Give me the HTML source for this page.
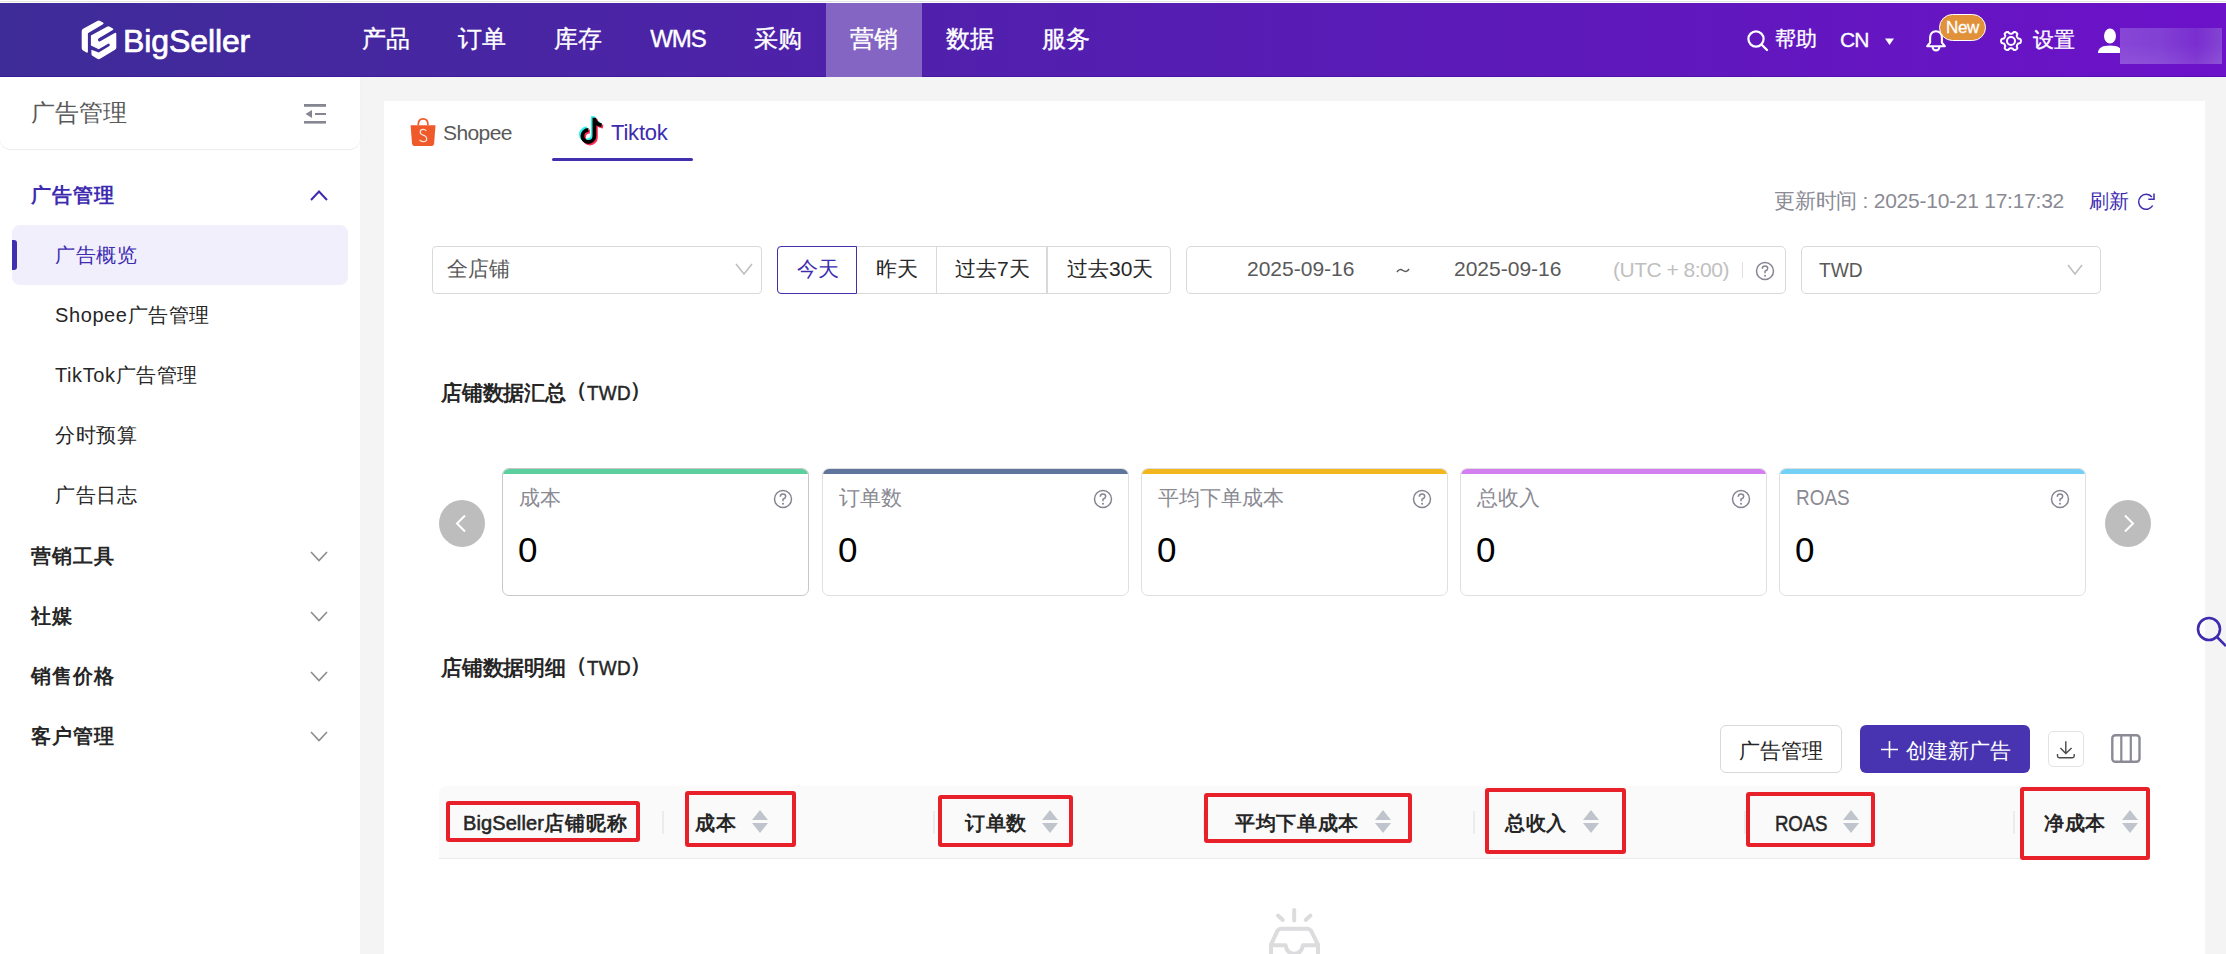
<!DOCTYPE html>
<html><head><meta charset="utf-8">
<style>
*{margin:0;padding:0;box-sizing:border-box}
html,body{width:2226px;height:954px;overflow:hidden;background:#f4f4f4;font-family:"Liberation Sans",sans-serif;color:#262626}
.a{position:absolute;white-space:nowrap;line-height:1}
#topline{position:absolute;left:0;top:0;width:2226px;height:3px;background:#fff}
#topline i{position:absolute;left:0;top:1px;width:2226px;height:1px;background:#e2e4e2}
#hdr{position:absolute;left:0;top:3px;width:2226px;height:74px;background:linear-gradient(90deg,#3e2c98 0%,#541eb0 50%,#6c12c9 100%)}
#hdr .nav{position:absolute;top:0;height:74px;color:#fff;font-size:24px;line-height:71px;text-align:center;-webkit-text-stroke:0.35px #fff}
#hdr .act{background:#8565c4}
#hdrline{position:absolute;left:0;top:73px;width:2226px;height:1px;background:rgba(40,0,150,.35)}
#sidebar{position:absolute;left:0;top:77px;width:360px;height:877px;background:#fff}
#stitle{position:absolute;left:0;top:0;width:360px;height:72px;background:#fff;border-radius:0 0 10px 10px;box-shadow:0 1px 1px rgba(0,0,0,.08)}
#main{position:absolute;left:384px;top:101px;width:1821px;height:853px;background:#fff}
.box{position:absolute;border:1px solid #d9d9d9;border-radius:4px;background:#fff}
.card{position:absolute;top:468px;width:307px;height:128px;border:1px solid #e0e0e0;border-radius:7px;background:#fff;overflow:hidden}
.card .bar{position:absolute;left:-1px;top:-1px;right:-1px;height:6px}
.card .lbl{position:absolute;left:16px;top:15px;font-size:21px;color:#8a8a93}
.card .val{position:absolute;left:15px;top:61px;font-size:35px;color:#000}
.card .q{position:absolute;left:270px;top:20px;line-height:0}
.circ{position:absolute;top:500px;width:46px;height:47px;border-radius:50%;background:#bdbdbd}
.red{position:absolute;border:4px solid #e8202a;border-radius:3px}
.th{position:absolute;top:812px;font-size:20px;letter-spacing:0.7px;font-weight:bold;color:#262626}
.sep{position:absolute;top:811px;width:2px;height:23px;background:#ececec}
.side{position:absolute;left:55px;font-size:20px;letter-spacing:0.6px;color:#262626;line-height:1;white-space:nowrap}
.sec{position:absolute;left:31px;font-size:20px;letter-spacing:0.9px;font-weight:bold;color:#262626;line-height:1;white-space:nowrap}
</style></head><body>
<div id="topline"><i></i></div>
<div id="hdr"><div id="hdrline"></div>
<svg class="a" style="left:78px;top:15px" width="42" height="44" viewBox="0 0 42 44"><g fill="#fff">
<path d="M3.7 13.2 Q3.7 11.6 5.1 10.8 L19.3 2.9 Q20.7 2.1 22.1 2.9 L25 4.6 Q26.4 5.5 25 6.3 L9.9 15.3 L9.9 33.6 Q9.9 35.2 8.5 34.4 L5.1 32.4 Q3.7 31.6 3.7 30 Z"/>
<path d="M12.9 17.6 L29 8.7 Q30.4 7.9 31.8 8.7 L34.8 10.4 Q36.2 11.3 34.8 12.1 L20.9 20.3 Q19.5 21.2 20.1 22.6 Q20.8 24 22.2 23.2 L36.7 14.9 Q38.3 14.1 38.3 15.9 L38.3 29.4 Q38.3 30.9 37 31.7 L22.1 40.8 Q20.7 41.6 19.3 40.8 L14.8 38.1 Q13.4 37.3 13.4 35.7 L13.4 31.8 L20.7 34.4 L30.6 28.6 Q32.2 27.6 31.7 26.4 Q31.1 25.1 29.7 25.9 L20.7 31.3 L12.9 27.6 Z"/>
</g></svg>
<div class="a" style="left:123px;top:22px;font-size:32px;color:#fff;-webkit-text-stroke:0.7px #fff;letter-spacing:-0.1px">BigSeller</div>
<div class="nav" style="left:338px;width:96px">产品</div>
<div class="nav" style="left:434px;width:96px">订单</div>
<div class="nav" style="left:530px;width:96px">库存</div>
<div class="nav" style="left:626px;width:104px;letter-spacing:-1px">WMS</div>
<div class="nav" style="left:730px;width:96px">采购</div>
<div class="nav act" style="left:826px;width:96px">营销</div>
<div class="nav" style="left:922px;width:96px">数据</div>
<div class="nav" style="left:1018px;width:96px">服务</div>
<svg class="a" style="left:1746px;top:26px" width="24" height="24" viewBox="0 0 24 24"><circle cx="10" cy="10" r="7.6" fill="none" stroke="#fff" stroke-width="2.2"/><path d="M15.5 15.5 L21 21" stroke="#fff" stroke-width="2.4" stroke-linecap="round"/></svg>
<div class="a" style="left:1775px;top:25px;font-size:21px;color:#fff;-webkit-text-stroke:0.3px #fff">帮助</div>
<div class="a" style="left:1840px;top:26px;font-size:21px;color:#fff;letter-spacing:-1px;-webkit-text-stroke:0.3px #fff">CN</div>
<svg class="a" style="left:1884px;top:35px" width="11" height="8" viewBox="0 0 11 8"><path d="M1 0.5 L10 0.5 L5.5 7 Z" fill="#fff"/></svg>
<svg class="a" style="left:1925px;top:23px" width="22" height="26" viewBox="0 0 22 26"><path d="M11 5.2 C7 5.2 5.1 8.2 5.1 12 L5.1 16.6 L2.2 20.2 L19.8 20.2 L16.9 16.6 L16.9 12 C16.9 8.2 15 5.2 11 5.2 Z" fill="none" stroke="#fff" stroke-width="2.1" stroke-linejoin="round"/><path d="M7.6 21 A3.4 3.4 0 0 0 14.4 21" fill="none" stroke="#fff" stroke-width="2.1"/></svg>
<div class="a" style="left:1939px;top:11px;width:47px;height:27px;border-radius:14px;background:#e0913a;border:1.3px solid #fff;color:#fff;font-size:17px;line-height:25px;text-align:center;letter-spacing:-0.3px;-webkit-text-stroke:0.3px #fff">New</div>
<svg class="a" style="left:1999px;top:27px" width="24" height="22" viewBox="0 0 24 22"><path fill="none" stroke="#fff" stroke-width="2" d="M21.90 11.00 L21.87 11.52 L21.77 12.03 L21.59 12.52 L21.31 12.98 L20.31 13.23 L19.31 13.38 L18.99 13.68 L18.74 14.00 L18.52 14.32 L18.32 14.65 L18.14 14.99 L17.97 15.34 L17.82 15.71 L17.71 16.14 L18.08 17.08 L18.37 18.07 L18.11 18.54 L17.77 18.94 L17.38 19.29 L16.95 19.57 L16.49 19.80 L15.99 19.97 L15.48 20.06 L14.94 20.05 L14.23 19.31 L13.60 18.52 L13.17 18.40 L12.77 18.34 L12.38 18.31 L12.00 18.30 L11.62 18.31 L11.23 18.34 L10.83 18.40 L10.40 18.52 L9.77 19.31 L9.06 20.05 L8.52 20.06 L8.01 19.97 L7.51 19.80 L7.05 19.57 L6.62 19.29 L6.23 18.94 L5.89 18.54 L5.63 18.07 L5.92 17.08 L6.29 16.14 L6.18 15.71 L6.03 15.34 L5.86 14.99 L5.68 14.65 L5.48 14.32 L5.26 14.00 L5.01 13.68 L4.69 13.38 L3.69 13.23 L2.69 12.98 L2.41 12.52 L2.23 12.03 L2.13 11.52 L2.10 11.00 L2.13 10.48 L2.23 9.97 L2.41 9.48 L2.69 9.02 L3.69 8.77 L4.69 8.62 L5.01 8.32 L5.26 8.00 L5.48 7.68 L5.68 7.35 L5.86 7.01 L6.03 6.66 L6.18 6.29 L6.29 5.86 L5.92 4.92 L5.63 3.93 L5.89 3.46 L6.23 3.06 L6.62 2.71 L7.05 2.43 L7.51 2.20 L8.01 2.03 L8.52 1.94 L9.06 1.95 L9.77 2.69 L10.40 3.48 L10.83 3.60 L11.23 3.66 L11.62 3.69 L12.00 3.70 L12.38 3.69 L12.77 3.66 L13.17 3.60 L13.60 3.48 L14.23 2.69 L14.94 1.95 L15.48 1.94 L15.99 2.03 L16.49 2.20 L16.95 2.43 L17.38 2.71 L17.77 3.06 L18.11 3.46 L18.37 3.93 L18.08 4.92 L17.71 5.86 L17.82 6.29 L17.97 6.66 L18.14 7.01 L18.32 7.35 L18.52 7.68 L18.74 8.00 L18.99 8.32 L19.31 8.62 L20.31 8.77 L21.31 9.02 L21.59 9.48 L21.77 9.97 L21.87 10.48 Z"/><circle cx="12" cy="11" r="4" fill="none" stroke="#fff" stroke-width="2"/></svg>
<div class="a" style="left:2033px;top:26px;font-size:21px;color:#fff;-webkit-text-stroke:0.3px #fff">设置</div>
<svg class="a" style="left:2097px;top:25px" width="26" height="26" viewBox="0 0 26 26"><ellipse cx="13" cy="8" rx="6" ry="7.5" fill="#fff"/><path d="M1 25 Q1 17.5 13 17.5 Q25 17.5 25 25 Z" fill="#fff"/></svg>
<div class="a" style="left:2120px;top:25px;width:102px;height:36px;background:linear-gradient(180deg,rgba(255,255,255,0) 45%,rgba(255,255,255,.07) 100%),linear-gradient(90deg,#8846d6 0%,#8240d4 40%,#7a2ed0 75%,#8444d2 100%)"></div>
</div>
<div id="sidebar"><div id="stitle">
<div class="a" style="left:31px;top:24px;font-size:24px;color:#595959">广告管理</div>
<svg class="a" style="left:304px;top:27px" width="22" height="20" viewBox="0 0 22 20"><rect x="0" y="0" width="22" height="2.8" fill="#868692"/><rect x="11" y="9" width="11" height="2" fill="#868692"/><rect x="0" y="17" width="22" height="2.6" fill="#868692"/><path d="M1.5 9.9 L8 5.9 L8 13.9 Z" fill="#868692"/></svg>
</div>
<div class="sec" style="top:108px;color:#3d2bb0">广告管理</div>
<svg class="a" style="left:310px;top:113px" width="18" height="11" viewBox="0 0 18 11"><path d="M1 10 L9 1.5 L17 10" fill="none" stroke="#3d2bb0" stroke-width="2"/></svg>
<div class="a" style="left:12px;top:148px;width:336px;height:60px;border-radius:8px;background:#f1effc"></div>
<div class="a" style="left:12px;top:163px;width:5px;height:30px;border-radius:0 3px 3px 0;background:#4030b0"></div>
<div class="side" style="top:168px;color:#3d2bb0">广告概览</div>
<div class="side" style="top:228px">Shopee广告管理</div>
<div class="side" style="top:288px">TikTok广告管理</div>
<div class="side" style="top:348px">分时预算</div>
<div class="side" style="top:408px">广告日志</div>
<div class="sec" style="top:469px">营销工具</div>
<svg class="a" style="left:310px;top:474px" width="18" height="11" viewBox="0 0 18 11"><path d="M1 1 L9 9.5 L17 1" fill="none" stroke="#8c8c8c" stroke-width="1.6"/></svg>
<div class="sec" style="top:529px">社媒</div>
<svg class="a" style="left:310px;top:534px" width="18" height="11" viewBox="0 0 18 11"><path d="M1 1 L9 9.5 L17 1" fill="none" stroke="#8c8c8c" stroke-width="1.6"/></svg>
<div class="sec" style="top:589px">销售价格</div>
<svg class="a" style="left:310px;top:594px" width="18" height="11" viewBox="0 0 18 11"><path d="M1 1 L9 9.5 L17 1" fill="none" stroke="#8c8c8c" stroke-width="1.6"/></svg>
<div class="sec" style="top:649px">客户管理</div>
<svg class="a" style="left:310px;top:654px" width="18" height="11" viewBox="0 0 18 11"><path d="M1 1 L9 9.5 L17 1" fill="none" stroke="#8c8c8c" stroke-width="1.6"/></svg>
</div>
<div id="main">
<svg class="a" style="left:26px;top:15.7px" width="27" height="30" viewBox="0 0 27 30"><path d="M8.2 8.2 Q8.2 1.9 13.1 1.9 Q18 1.9 18 8.2" fill="none" stroke="#f05a2a" stroke-width="1.7"/><path d="M0.6 8.3 L25.5 8.3 L24.1 26.5 Q23.9 29 21.5 29 L4.6 29 Q2.2 29 2 26.5 Z" fill="#f05a2a"/><path d="M16.3 13.8 Q15.3 12.4 13.2 12.4 Q10.2 12.4 10.2 15 Q10.2 17.2 13.2 18.1 Q16.7 19.1 16.7 21.9 Q16.7 24.6 13.2 24.6 Q10.8 24.6 9.5 22.9" fill="none" stroke="#fde3d8" stroke-width="1.2"/></svg>
<div class="a" style="left:59px;top:21px;font-size:21px;color:#595959;letter-spacing:-0.6px">Shopee</div>
<svg class="a" style="left:188px;top:9px" width="40" height="40" viewBox="0 0 40 40"><g transform="translate(-1.5,-1.5)"><path d="M22.4 7.8 L22.4 26 A6 6 0 1 1 16.4 20 M22.4 8.6 Q23.6 14.4 29.6 15.2" fill="none" stroke="#25f4ee" stroke-width="3.8"/></g><g transform="translate(1.5,1.5)"><path d="M22.4 7.8 L22.4 26 A6 6 0 1 1 16.4 20 M22.4 8.6 Q23.6 14.4 29.6 15.2" fill="none" stroke="#fe2c55" stroke-width="3.8"/></g><path d="M22.4 7.8 L22.4 26 A6 6 0 1 1 16.4 20 M22.4 8.6 Q23.6 14.4 29.6 15.2" fill="none" stroke="#000" stroke-width="3.8"/></svg>
<div class="a" style="left:227px;top:21px;font-size:22px;color:#3d2bb0;letter-spacing:-0.2px">Tiktok</div>
<div class="a" style="left:168px;top:57px;width:141px;height:3px;border-radius:2px;background:#4030b0"></div>
<div class="a" style="left:1390px;top:89px;font-size:21px;color:#8a8a94;letter-spacing:-0.25px">更新时间 : 2025-10-21 17:17:32</div>
<div class="a" style="left:1705px;top:90px;font-size:20px;color:#3d2bb0">刷新</div>
<svg class="a" style="left:1752px;top:91px" width="20" height="20" viewBox="0 0 20 20"><path d="M16.7 13.5 A7.5 7.5 0 1 1 15.9 5" fill="none" stroke="#3d2bb0" stroke-width="1.5"/><path d="M18 1.5 L18 7.3 L12.3 7.3" fill="none" stroke="#3d2bb0" stroke-width="1.5"/></svg>
<div class="box" style="left:48px;top:145px;width:330px;height:48px"></div>
<div class="a" style="left:63px;top:157px;font-size:21px;color:#595959">全店铺</div>
<svg class="a" style="left:351px;top:161px" width="18" height="14" viewBox="0 0 18 14"><path d="M1 2 L9 12 L17 2" fill="none" stroke="#bfbfbf" stroke-width="1.6"/></svg>
<div class="box" style="left:393px;top:145px;width:394px;height:48px"></div>
<div class="a" style="left:393px;top:145px;width:80px;height:48px;border:1px solid #4030b0;border-radius:4px 0 0 4px"></div>
<div class="a" style="left:552px;top:145px;width:1px;height:48px;background:#d9d9d9"></div>
<div class="a" style="left:662px;top:145px;width:2px;height:48px;background:#d9d9d9"></div>
<div class="a" style="left:413px;top:157px;font-size:21px;color:#3d2bb0">今天</div>
<div class="a" style="left:492px;top:157px;font-size:21px">昨天</div>
<div class="a" style="left:571px;top:157px;font-size:21px">过去7天</div>
<div class="a" style="left:683px;top:157px;font-size:21px">过去30天</div>
<div class="box" style="left:802px;top:145px;width:600px;height:48px;border-radius:5px"></div>
<div class="a" style="left:863px;top:157px;font-size:21px;color:#595959">2025-09-16</div>
<svg class="a" style="left:1012px;top:166px" width="14" height="7" viewBox="0 0 14 7"><path d="M1 5 Q3.5 1 7 3.5 Q10.5 6 13 2" fill="none" stroke="#595959" stroke-width="1.5"/></svg>
<div class="a" style="left:1070px;top:157px;font-size:21px;color:#595959">2025-09-16</div>
<div class="a" style="left:1229px;top:158px;font-size:21px;color:#bfbfbf;letter-spacing:-0.5px">(UTC + 8:00)</div>
<div class="a" style="left:1358px;top:161px;width:1px;height:16px;background:#e0e0e0"></div>
<div class="a" style="left:1371px;top:160px"><svg width="20" height="20" viewBox="0 0 20 20"><circle cx="10" cy="10" r="8.5" fill="none" stroke="#868692" stroke-width="1.5"/><path d="M7.3 7.7 Q7.3 5 10 5 Q12.7 5 12.7 7.5 Q12.7 9.2 10 10.3 L10 12.2" fill="none" stroke="#868692" stroke-width="1.5"/><circle cx="10" cy="14.8" r="1" fill="#868692"/></svg></div>
<div class="box" style="left:1417px;top:145px;width:300px;height:48px;border-radius:5px"></div>
<div class="a" style="left:1435px;top:158px;font-size:21px;color:#595959;transform:scaleX(0.915);transform-origin:0 0">TWD</div>
<svg class="a" style="left:1683px;top:163px" width="16" height="11" viewBox="0 0 16 11"><path d="M1 1 L8 10 L15 1" fill="none" stroke="#bfbfbf" stroke-width="1.6"/></svg>
<div class="a" style="left:57px;top:281px;font-size:21px;font-weight:bold;letter-spacing:-0.2px">店铺数据汇总</div>
<div class="a" style="left:182px;top:278px;font-size:21px;font-weight:bold">（</div>
<div class="a" style="left:203px;top:281px;font-size:21px;-webkit-text-stroke:0.5px #262626;letter-spacing:0.3px;transform:scaleX(0.9);transform-origin:0 0">TWD</div>
<div class="a" style="left:246px;top:278px;font-size:21px;font-weight:bold">）</div>
<div class="a" style="left:57px;top:556px;font-size:21px;font-weight:bold;letter-spacing:-0.2px">店铺数据明细</div>
<div class="a" style="left:182px;top:553px;font-size:21px;font-weight:bold">（</div>
<div class="a" style="left:203px;top:556px;font-size:21px;-webkit-text-stroke:0.5px #262626;letter-spacing:0.3px;transform:scaleX(0.9);transform-origin:0 0">TWD</div>
<div class="a" style="left:246px;top:553px;font-size:21px;font-weight:bold">）</div>
</div>
<div class="circ" style="left:439px"><svg width="46" height="47" viewBox="0 0 46 47"><path d="M26 15.5 L18 23.5 L26 31.5" fill="none" stroke="#fff" stroke-width="2"/></svg></div>
<div class="circ" style="left:2105px"><svg width="46" height="47" viewBox="0 0 46 47"><path d="M20 15.5 L28 23.5 L20 31.5" fill="none" stroke="#fff" stroke-width="2"/></svg></div>
<div class="card" style="left:502px;border-color:#c8c8c8"><div class="bar" style="background:#5dcf9e"></div><div class="lbl" style="">成本</div><div class="val">0</div><div class="q"><svg width="20" height="20" viewBox="0 0 20 20"><circle cx="10" cy="10" r="8.5" fill="none" stroke="#868692" stroke-width="1.5"/><path d="M7.3 7.7 Q7.3 5 10 5 Q12.7 5 12.7 7.5 Q12.7 9.2 10 10.3 L10 12.2" fill="none" stroke="#868692" stroke-width="1.5"/><circle cx="10" cy="14.8" r="1" fill="#868692"/></svg></div></div>
<div class="card" style="left:822px"><div class="bar" style="background:#60759c"></div><div class="lbl" style="">订单数</div><div class="val">0</div><div class="q"><svg width="20" height="20" viewBox="0 0 20 20"><circle cx="10" cy="10" r="8.5" fill="none" stroke="#868692" stroke-width="1.5"/><path d="M7.3 7.7 Q7.3 5 10 5 Q12.7 5 12.7 7.5 Q12.7 9.2 10 10.3 L10 12.2" fill="none" stroke="#868692" stroke-width="1.5"/><circle cx="10" cy="14.8" r="1" fill="#868692"/></svg></div></div>
<div class="card" style="left:1141px"><div class="bar" style="background:#f2b61f"></div><div class="lbl" style="">平均下单成本</div><div class="val">0</div><div class="q"><svg width="20" height="20" viewBox="0 0 20 20"><circle cx="10" cy="10" r="8.5" fill="none" stroke="#868692" stroke-width="1.5"/><path d="M7.3 7.7 Q7.3 5 10 5 Q12.7 5 12.7 7.5 Q12.7 9.2 10 10.3 L10 12.2" fill="none" stroke="#868692" stroke-width="1.5"/><circle cx="10" cy="14.8" r="1" fill="#868692"/></svg></div></div>
<div class="card" style="left:1460px"><div class="bar" style="background:#d27ff0"></div><div class="lbl" style="">总收入</div><div class="val">0</div><div class="q"><svg width="20" height="20" viewBox="0 0 20 20"><circle cx="10" cy="10" r="8.5" fill="none" stroke="#868692" stroke-width="1.5"/><path d="M7.3 7.7 Q7.3 5 10 5 Q12.7 5 12.7 7.5 Q12.7 9.2 10 10.3 L10 12.2" fill="none" stroke="#868692" stroke-width="1.5"/><circle cx="10" cy="14.8" r="1" fill="#868692"/></svg></div></div>
<div class="card" style="left:1779px"><div class="bar" style="background:#74d0f5"></div><div class="lbl" style=";font-size:22px;top:16px;transform:scaleX(0.86);transform-origin:0 0">ROAS</div><div class="val">0</div><div class="q"><svg width="20" height="20" viewBox="0 0 20 20"><circle cx="10" cy="10" r="8.5" fill="none" stroke="#868692" stroke-width="1.5"/><path d="M7.3 7.7 Q7.3 5 10 5 Q12.7 5 12.7 7.5 Q12.7 9.2 10 10.3 L10 12.2" fill="none" stroke="#868692" stroke-width="1.5"/><circle cx="10" cy="14.8" r="1" fill="#868692"/></svg></div></div>
<div class="a" style="left:2196px;top:616px"><svg width="30" height="31" viewBox="0 0 30 31"><circle cx="13" cy="13" r="11" fill="none" stroke="#3d2bb0" stroke-width="2.6"/><path d="M21 21 L30 30" stroke="#3d2bb0" stroke-width="2.6"/></svg></div>
<div class="box" style="left:1720px;top:725px;width:122px;height:48px;border-radius:6px"></div>
<div class="a" style="left:1739px;top:740px;font-size:21px">广告管理</div>
<div class="a" style="left:1860px;top:725px;width:170px;height:48px;border-radius:6px;background:#4834b0"></div>
<svg class="a" style="left:1881px;top:741px" width="17" height="17" viewBox="0 0 17 17"><path d="M8.5 0 L8.5 17 M0 8.5 L17 8.5" stroke="#fff" stroke-width="1.6"/></svg>
<div class="a" style="left:1906px;top:740px;font-size:21px;color:#fff">创建新广告</div>
<div class="box" style="left:2048px;top:731px;width:36px;height:36px;border-radius:5px;border-color:#e3e3e3"></div>
<svg class="a" style="left:2056px;top:739px" width="20" height="20" viewBox="0 0 20 20"><path d="M9.8 2.2 L9.8 14.3 M4.4 9.1 L9.8 14.5 L15.6 9.1 M1.5 14.9 L1.5 17.1 Q1.5 18.8 3.3 18.8 L16.4 18.8 Q18.2 18.8 18.2 17.1 L18.2 14.9" fill="none" stroke="#4a4a4a" stroke-width="1.4"/></svg>
<svg class="a" style="left:2111px;top:734px" width="30" height="29" viewBox="0 0 30 29"><rect x="1.3" y="1.3" width="27.2" height="26.4" rx="3" fill="none" stroke="#8b8b96" stroke-width="2.4"/><path d="M10.3 1.5 L10.3 27.5 M19.8 1.5 L19.8 27.5" stroke="#8b8b96" stroke-width="2.2"/></svg>
<div class="a" style="left:439px;top:786px;width:1711px;height:73px;background:#fafafa;border-bottom:1px solid #ebebeb;border-radius:6px 6px 0 0"></div>
<div class="sep" style="left:662px"></div>
<div class="sep" style="left:933px"></div>
<div class="sep" style="left:1203px"></div>
<div class="sep" style="left:1473px"></div>
<div class="sep" style="left:1744px"></div>
<div class="sep" style="left:2013px"></div>
<div class="th" style="left:463px;top:810px;letter-spacing:1.1px"><span style="font-weight:normal;-webkit-text-stroke:0.55px #262626;letter-spacing:0.1px">BigSeller</span>店铺昵称</div>
<div class="th" style="left:695px;top:810px;letter-spacing:0.7px">成本</div>
<div class="th" style="left:965px;top:810px;letter-spacing:0.7px">订单数</div>
<div class="th" style="left:1235px;top:810px;letter-spacing:0.7px">平均下单成本</div>
<div class="th" style="left:1505px;top:810px;letter-spacing:0.7px">总收入</div>
<div class="th" style="left:1775px;top:811px;letter-spacing:0;font-size:22px;font-weight:normal;-webkit-text-stroke:0.5px #262626;letter-spacing:-0.2px;transform:scaleX(0.85);transform-origin:0 0">ROAS</div>
<div class="th" style="left:2044px;top:810px;letter-spacing:0.7px">净成本</div>
<svg class="a" style="left:752px;top:810px" width="16" height="24" viewBox="0 0 16 24"><path d="M8 0 L16 10 L0 10 Z M0 13 L16 13 L8 23 Z" fill="#c0c4cc"/></svg>
<svg class="a" style="left:1042px;top:810px" width="16" height="24" viewBox="0 0 16 24"><path d="M8 0 L16 10 L0 10 Z M0 13 L16 13 L8 23 Z" fill="#c0c4cc"/></svg>
<svg class="a" style="left:1375px;top:810px" width="16" height="24" viewBox="0 0 16 24"><path d="M8 0 L16 10 L0 10 Z M0 13 L16 13 L8 23 Z" fill="#c0c4cc"/></svg>
<svg class="a" style="left:1583px;top:810px" width="16" height="24" viewBox="0 0 16 24"><path d="M8 0 L16 10 L0 10 Z M0 13 L16 13 L8 23 Z" fill="#c0c4cc"/></svg>
<svg class="a" style="left:1843px;top:810px" width="16" height="24" viewBox="0 0 16 24"><path d="M8 0 L16 10 L0 10 Z M0 13 L16 13 L8 23 Z" fill="#c0c4cc"/></svg>
<svg class="a" style="left:2122px;top:810px" width="16" height="24" viewBox="0 0 16 24"><path d="M8 0 L16 10 L0 10 Z M0 13 L16 13 L8 23 Z" fill="#c0c4cc"/></svg>
<div class="red" style="left:446px;top:801px;width:194px;height:41px"></div>
<div class="red" style="left:685px;top:791px;width:111px;height:56px"></div>
<div class="red" style="left:938px;top:795px;width:135px;height:52px"></div>
<div class="red" style="left:1204px;top:793px;width:208px;height:50px"></div>
<div class="red" style="left:1485px;top:788px;width:141px;height:66px"></div>
<div class="red" style="left:1746px;top:792px;width:129px;height:55px"></div>
<div class="red" style="left:2020px;top:787px;width:130px;height:73px"></div>
<svg class="a" style="left:1260px;top:900px" width="70" height="54" viewBox="0 0 70 54">
  <g fill="none" stroke="#dcdcdf" stroke-width="4" stroke-linecap="round" stroke-linejoin="round">
    <path d="M34.2 10 L34.2 20.5 M18 15.5 L22.8 20 M50.5 15.5 L45.7 20"/>
    <path d="M11 60 L11 44.7 L17.5 30.7 Q19 28.7 21 28.7 L47.5 28.7 Q49.5 28.7 51 30.7 L58 44.7 L58 60"/>
    <path d="M11 45.2 L25.5 45.2 Q27 53.7 34.2 53.7 Q41.4 53.7 43 45.2 L58 45.2"/>
  </g>
</svg>
</body></html>
